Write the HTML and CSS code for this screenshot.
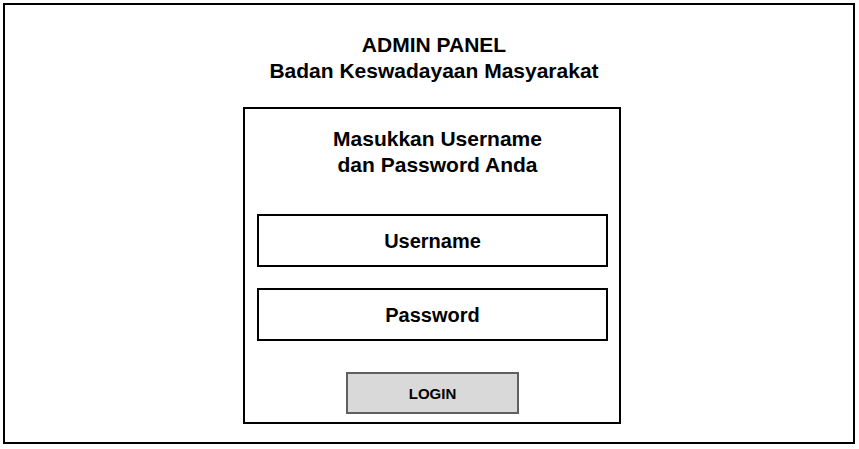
FILE: index.html
```html
<!DOCTYPE html>
<html lang="en">

<head>
    <meta charset="UTF-8">
    <meta name="viewport" content="width=device-width, initial-scale=1.0">
    <title>Admin Panel - Login</title>
    <link rel="stylesheet" href="styles.css">
</head>

<body>
    <div class="frame">
        <header class="title">
            <p>ADMIN PANEL</p>
            <p class="subtitle">Badan Keswadayaan Masyarakat</p>
        </header>
        <div class="login-box">
            <p class="prompt">Masukkan Username<br>dan Password Anda</p>
            <div class="field">Username</div>
            <div class="field">Password</div>
            <div class="center">
                <button class="login-btn">LOGIN</button>
            </div>
        </div>
    </div>
</body>

</html>
```

FILE: styles.css
```css
body {
    font-family: "Liberation Sans", Arial, sans-serif;
    background-color: #fff;
    color: #000;
    margin: 0;
    padding: 3px;
}

.frame {
    width: 852px;
    height: 441px;
    box-sizing: border-box;
    border: 2px solid #000;
    padding: 27px 0 0 6px;
}

.title {
    text-align: center;
    font-size: 21px;
    font-weight: bold;
    line-height: 26px;
    padding-left: 4px;
}

.title p {
    margin: 0;
}

.login-box {
    width: 378px;
    height: 317px;
    box-sizing: border-box;
    margin: 23px auto 0;
    border: 2px solid #000;
    padding: 17px 11px 0 12px;
}

.prompt {
    margin: 0 0 36px;
    padding-left: 10px;
    text-align: center;
    font-size: 21px;
    font-weight: bold;
    line-height: 26px;
}

.field {
    height: 53px;
    box-sizing: border-box;
    border: 2px solid #000;
    display: flex;
    justify-content: center;
    align-items: center;
    padding-top: 2px;
    font-size: 20px;
    font-weight: bold;
    margin-bottom: 21px;
}

.center {
    display: flex;
    justify-content: center;
    padding-top: 10px;
}

.login-btn {
    width: 173px;
    height: 42px;
    background-color: #d9d9d9;
    border: 2px solid #5f5f5f;
    font-family: inherit;
    font-size: 15px;
    font-weight: bold;
    color: #000;
    padding: 0;
}
```
